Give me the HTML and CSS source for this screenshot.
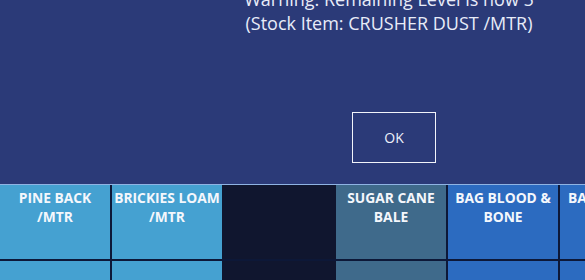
FILE: index.html
```html
<!DOCTYPE html>
<html>
<head>
<meta charset="utf-8">
<link rel="stylesheet" href="styles.css">
</head>
<body>
<div class="screen">
  <div class="dialog">
    <div class="message">
      <div class="line">Warning: Remaining Level is now 5</div>
      <div class="line">(Stock Item: CRUSHER DUST /MTR)</div>
    </div>
    <div class="actions">
      <button class="ok">OK</button>
    </div>
  </div>
  <div class="tiles">
    <div class="tile sky">PINE BACK<br>/MTR</div>
    <div class="tile sky">BRICKIES LOAM<br>/MTR</div>
    <div class="tile empty"></div>
    <div class="tile slate">SUGAR CANE<br>BALE</div>
    <div class="tile royal">BAG BLOOD &amp;<br>BONE</div>
    <div class="tile royal edge">BAG</div>
    <div class="tile sky"></div>
    <div class="tile sky"></div>
    <div class="tile empty"></div>
    <div class="tile slate"></div>
    <div class="tile royal"></div>
    <div class="tile royal"></div>
  </div>
</div>
</body>
</html>
```
FILE: styles.css
```css
html, body {
  margin: 0;
  padding: 0;
  background: #0d1838;
  overflow: hidden;
}
.screen {
  width: 585px;
  height: 280px;
  overflow: hidden;
  font-family: "Open Sans", "Noto Sans", sans-serif;
}
.dialog {
  background: #2b3a78;
  border-bottom: 1px solid #8fb3e3;
  box-sizing: border-box;
  height: 185px;
  display: flex;
  flex-direction: column;
  align-items: flex-end;
}
.message {
  width: 320px;
  margin-right: 36px;
  margin-top: -13px;
  color: #e8ecf8;
  font-size: 18px;
  line-height: 24px;
  text-align: center;
  white-space: nowrap;
}
.actions {
  width: 320px;
  margin-right: 31px;
  margin-top: 77px;
  display: flex;
  justify-content: center;
}
.ok {
  width: 84px;
  height: 51px;
  background: transparent;
  border: 1px solid #f2f4fa;
  color: #eef1fa;
  font-family: "Open Sans", "Noto Sans", sans-serif;
  font-size: 14px;
  padding: 0;
}
.tiles {
  display: grid;
  grid-template-columns: repeat(6, 110px);
  grid-auto-rows: 74px;
  gap: 2px;
}
.tile {
  color: #f4f7fc;
  font-weight: 700;
  font-size: 13.8px;
  line-height: 19px;
  text-align: center;
  padding-top: 3px;
  white-space: nowrap;
  overflow: hidden;
  box-sizing: border-box;
}
.sky { background: #45a1d1; }
.slate { background: #3f6a8b; }
.royal { background: #2c6bc0; }
.empty { background: #10162f; margin: 0 -2px; }
.edge { text-align: left; padding-left: 8px; }
```
